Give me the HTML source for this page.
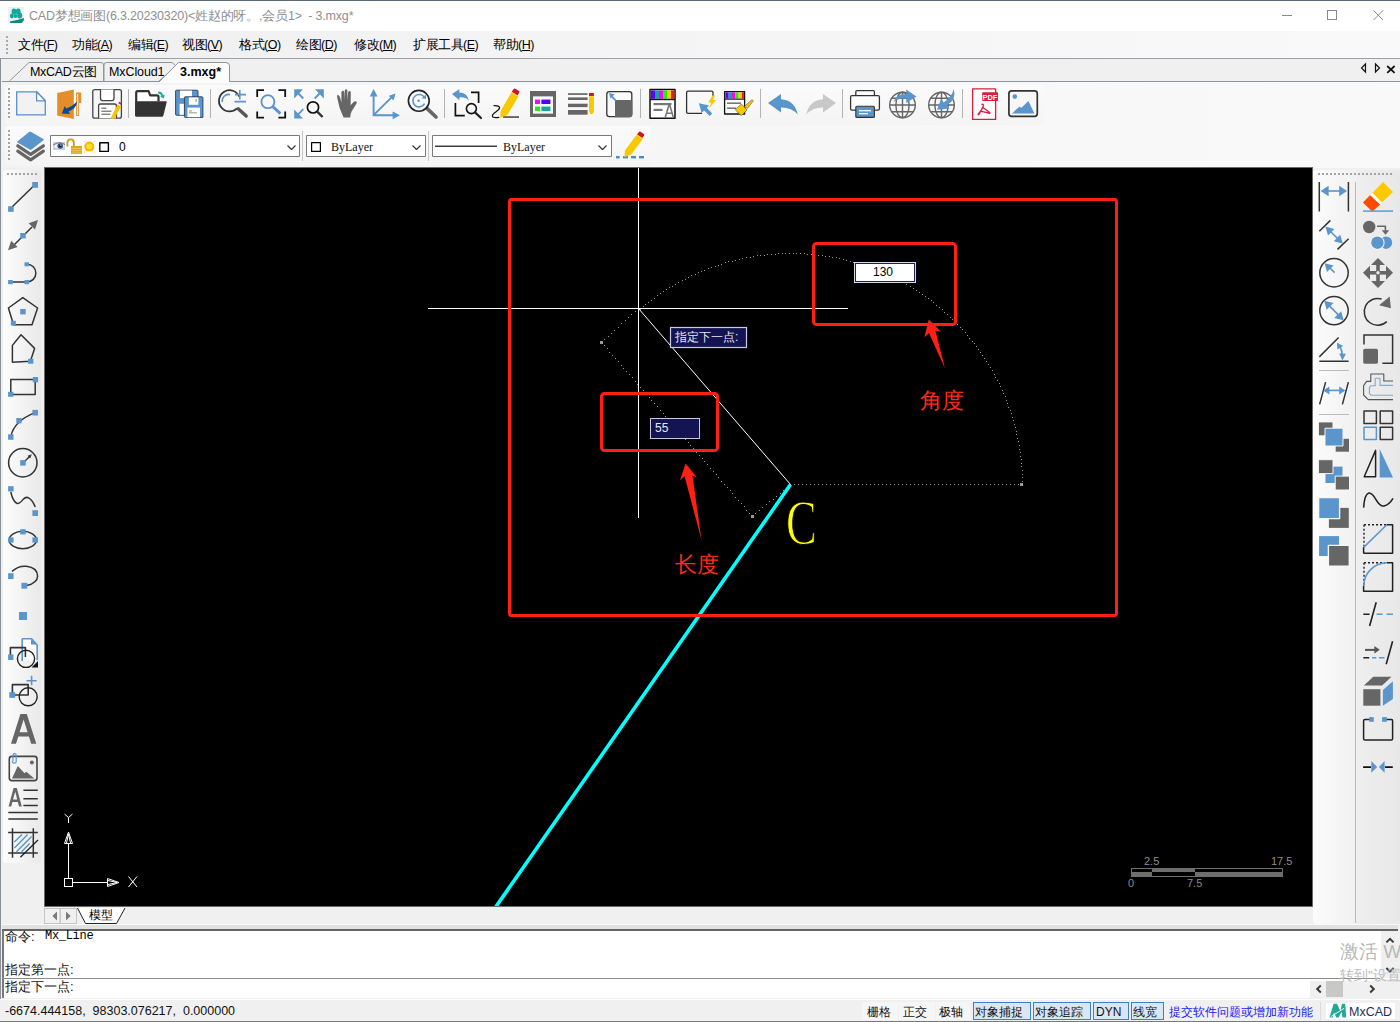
<!DOCTYPE html>
<html><head><meta charset="utf-8"><style>
*{margin:0;padding:0;box-sizing:border-box}
html,body{width:1400px;height:1022px;overflow:hidden;background:#f0f0f0;font-family:"Liberation Sans",sans-serif;font-size:12px;color:#000}
.a{position:absolute}
.t{position:absolute;white-space:nowrap}
svg{position:absolute;overflow:visible}
#title{left:0;top:0;width:1400px;height:31px;background:#fff;border-top:1px solid #5a6a7a}
#menu{left:0;top:31px;width:1400px;height:27px;background:linear-gradient(90deg,#efefef,#f4f4f4 40%,#f9f9f9)}
.mi{position:absolute;top:37.5px;font-size:12.5px;line-height:15px;color:#000;letter-spacing:-0.5px;white-space:nowrap}
#mdi{left:0;top:58px;width:1400px;height:964px;border-left:1px solid #8a9098;border-top:1px solid #9aa0a6}
#dock{left:2px;top:82px;width:1398px;height:86px;background:linear-gradient(90deg,#f2f2f2,#f6f6f6 40%,#f9f9f9)}
#tabs{left:2px;top:59px;width:1398px;height:23px;background:#f0f0f0}
#tb1{left:5px;top:85px;width:1039px;height:40px;background:linear-gradient(#fbfbfb,#f4f4f4);border-radius:4px}
#tb2{left:5px;top:126px;width:646px;height:40px;background:linear-gradient(#fbfbfb,#f4f4f4);border-radius:4px}
#canvas{left:44px;top:167px;width:1269px;height:740px;background:#000;border:1px solid #6a6a6a}
#ltb{left:3px;top:170px;width:38px;height:693px;background:linear-gradient(90deg,#fdfdfd,#e9e9e9);border-radius:3px}
#rtb{left:1313px;top:170px;width:87px;height:754px;background:linear-gradient(90deg,#fcfcfc 0,#f1f1f1 48%,#eeeeee 52%,#e8e8e8 100%);border-radius:3px}
#modelbar{left:44px;top:907px;width:1269px;height:17px;background:#f0f0f0}
#cmdstrip{left:2px;top:924px;width:1396px;height:7px;background:#e1e1e1;border-top:1px solid #fafafa;border-bottom:2px solid #646464}
#cmd{left:2px;top:931px;width:1396px;height:67px;background:#fff;border-left:2px solid #7a7a7a}
#status{left:0;top:999px;width:1400px;height:23px;background:#f0f0f0;border-top:1px solid #fff;border-bottom:1px solid #7a7a7a}
</style></head><body>
<div id="title" class="a"></div>
<svg style="left:0;top:0" width="30" height="30">
<rect x="8" y="7" width="16" height="16" rx="1" fill="#f0f0f0"/>
<g fill="#12a898"><ellipse cx="14" cy="11.6" rx="2.4" ry="3"/><ellipse cx="18.2" cy="11.4" rx="2.4" ry="3"/><ellipse cx="11.8" cy="16" rx="1.9" ry="2.4"/><ellipse cx="15.6" cy="16" rx="2.2" ry="2"/><ellipse cx="19.8" cy="15.6" rx="2.4" ry="3"/></g>
<path d="M9.6 21.4 Q17 20.4 24 18 L23.8 20.6 L21.6 23 H10.4Z" fill="#0e8a7c"/>
</svg>
<div class="t" style="left:29px;top:8px;font-size:12.5px;line-height:17px;color:#8f8f8f;letter-spacing:-0.2px">CAD梦想画图(6.3.20230320)&lt;姓赵的呀。,会员1&gt; &nbsp;- 3.mxg*</div>
<svg style="left:1282px;top:15px" width="12" height="2"><rect x="0" y="0" width="10" height="1" fill="#8a8a8a"/></svg>
<svg style="left:1327px;top:10px" width="12" height="12"><rect x="0.5" y="0.5" width="9" height="9" fill="none" stroke="#8a8a8a" stroke-width="1"/></svg>
<svg style="left:1373px;top:10px" width="12" height="12"><path d="M0.5 0.5 L10 10 M10 0.5 L0.5 10" stroke="#8a8a8a" stroke-width="1"/></svg>
<div id="menu" class="a"></div>
<svg style="left:6px;top:36px" width="3" height="20"><g fill="#a8a8a8"><rect x="0" y="0" width="2" height="2"/><rect x="0" y="4" width="2" height="2"/><rect x="0" y="8" width="2" height="2"/><rect x="0" y="12" width="2" height="2"/><rect x="0" y="16" width="2" height="2"/></g></svg>
<div class="mi" style="left:18px">文件(<u>F</u>)</div>
<div class="mi" style="left:72px">功能(<u>A</u>)</div>
<div class="mi" style="left:128px">编辑(<u>E</u>)</div>
<div class="mi" style="left:182px">视图(<u>V</u>)</div>
<div class="mi" style="left:239px">格式(<u>O</u>)</div>
<div class="mi" style="left:296px">绘图(<u>D</u>)</div>
<div class="mi" style="left:354px">修改(<u>M</u>)</div>
<div class="mi" style="left:413px">扩展工具(<u>E</u>)</div>
<div class="mi" style="left:493px">帮助(<u>H</u>)</div>
<div id="mdi" class="a"></div>
<div id="dock" class="a"></div>
<div id="tabs" class="a"></div>
<svg style="left:0;top:58px" width="1400" height="25">
<path d="M9.5 23 L29 4.5 L101 4.5 Q103.5 4.5 103.5 7 L103.5 23" fill="#f0f0f0" stroke="#8f959c" stroke-width="1"/>
<path d="M104 23 L104 7 Q104 4.5 106.5 4.5 L172 4.5 L176 8 L159 23" fill="#f0f0f0" stroke="#8f959c" stroke-width="1"/>
<path d="M2 23.5 L1400 23.5" stroke="#8f959c" stroke-width="1"/>
<path d="M159.5 23.5 L178.5 4.5 L226 4.5 Q229.5 4.5 229.5 8 L229.5 23.5" fill="#fcfcfc" stroke="#8f959c" stroke-width="1"/>
<rect x="160" y="23" width="69" height="2" fill="#fcfcfc"/>
</svg>
<div class="t" style="left:30px;top:64px;font-size:12.5px;line-height:16px;letter-spacing:-0.3px">MxCAD云图</div>
<div class="t" style="left:109px;top:64px;font-size:12.5px;line-height:16px;letter-spacing:-0.1px">MxCloud1</div>
<div class="t" style="left:180px;top:64px;font-size:12.5px;line-height:16px;font-weight:bold">3.mxg*</div>
<svg style="left:1358px;top:62px" width="42" height="14">
<path d="M7.5 2 L3.5 6 L7.5 10 Z" fill="none" stroke="#111" stroke-width="1.2"/>
<path d="M17.5 2 L21.5 6 L17.5 10 Z" fill="none" stroke="#111" stroke-width="1.2"/>
<path d="M29.2 4 L36.6 10.8 M36.6 4 L29.2 10.8" stroke="#111" stroke-width="1.7"/>
</svg>
<div id="tb1" class="a"></div>
<div id="tb2" class="a"></div>
<div id="canvas" class="a"></div>
<svg style="left:0;top:0" width="1400" height="1022">
<defs><clipPath id="cc"><rect x="45" y="168" width="1267" height="738"/></clipPath></defs>
<g clip-path="url(#cc)">
<g fill="#9a9a9a"><rect x="1022" y="484" width="1" height="1"/><rect x="1022" y="481" width="1" height="1"/><rect x="1022" y="477" width="1" height="1"/><rect x="1022" y="474" width="1" height="1"/><rect x="1022" y="470" width="1" height="1"/><rect x="1021" y="466" width="1" height="1"/><rect x="1021" y="463" width="1" height="1"/><rect x="1021" y="459" width="1" height="1"/><rect x="1020" y="456" width="1" height="1"/><rect x="1020" y="452" width="1" height="1"/><rect x="1019" y="449" width="1" height="1"/><rect x="1019" y="445" width="1" height="1"/><rect x="1018" y="441" width="1" height="1"/><rect x="1017" y="438" width="1" height="1"/><rect x="1016" y="434" width="1" height="1"/><rect x="1016" y="431" width="1" height="1"/><rect x="1015" y="427" width="1" height="1"/><rect x="1014" y="424" width="1" height="1"/><rect x="1013" y="420" width="1" height="1"/><rect x="1012" y="417" width="1" height="1"/><rect x="1011" y="413" width="1" height="1"/><rect x="1010" y="410" width="1" height="1"/><rect x="1008" y="407" width="1" height="1"/><rect x="1007" y="403" width="1" height="1"/><rect x="1006" y="400" width="1" height="1"/><rect x="1005" y="396" width="1" height="1"/><rect x="1003" y="393" width="1" height="1"/><rect x="1002" y="390" width="1" height="1"/><rect x="1000" y="386" width="1" height="1"/><rect x="999" y="383" width="1" height="1"/><rect x="997" y="380" width="1" height="1"/><rect x="995" y="377" width="1" height="1"/><rect x="994" y="374" width="1" height="1"/><rect x="992" y="370" width="1" height="1"/><rect x="990" y="367" width="1" height="1"/><rect x="988" y="364" width="1" height="1"/><rect x="986" y="361" width="1" height="1"/><rect x="984" y="358" width="1" height="1"/><rect x="982" y="355" width="1" height="1"/><rect x="980" y="352" width="1" height="1"/><rect x="978" y="349" width="1" height="1"/><rect x="976" y="346" width="1" height="1"/><rect x="974" y="343" width="1" height="1"/><rect x="972" y="341" width="1" height="1"/><rect x="969" y="338" width="1" height="1"/><rect x="967" y="335" width="1" height="1"/><rect x="965" y="332" width="1" height="1"/><rect x="962" y="329" width="1" height="1"/><rect x="960" y="327" width="1" height="1"/><rect x="957" y="324" width="1" height="1"/><rect x="955" y="322" width="1" height="1"/><rect x="952" y="319" width="1" height="1"/><rect x="950" y="317" width="1" height="1"/><rect x="947" y="314" width="1" height="1"/><rect x="944" y="312" width="1" height="1"/><rect x="942" y="309" width="1" height="1"/><rect x="939" y="307" width="1" height="1"/><rect x="936" y="305" width="1" height="1"/><rect x="933" y="302" width="1" height="1"/><rect x="931" y="300" width="1" height="1"/><rect x="928" y="298" width="1" height="1"/><rect x="925" y="296" width="1" height="1"/><rect x="922" y="294" width="1" height="1"/><rect x="919" y="292" width="1" height="1"/><rect x="916" y="290" width="1" height="1"/><rect x="913" y="288" width="1" height="1"/><rect x="910" y="286" width="1" height="1"/><rect x="906" y="284" width="1" height="1"/><rect x="903" y="282" width="1" height="1"/><rect x="900" y="281" width="1" height="1"/><rect x="897" y="279" width="1" height="1"/><rect x="894" y="277" width="1" height="1"/><rect x="891" y="276" width="1" height="1"/><rect x="887" y="274" width="1" height="1"/><rect x="884" y="273" width="1" height="1"/><rect x="881" y="271" width="1" height="1"/><rect x="877" y="270" width="1" height="1"/><rect x="874" y="269" width="1" height="1"/><rect x="871" y="267" width="1" height="1"/><rect x="867" y="266" width="1" height="1"/><rect x="864" y="265" width="1" height="1"/><rect x="860" y="264" width="1" height="1"/><rect x="857" y="263" width="1" height="1"/><rect x="853" y="262" width="1" height="1"/><rect x="850" y="261" width="1" height="1"/><rect x="846" y="260" width="1" height="1"/><rect x="843" y="259" width="1" height="1"/><rect x="839" y="258" width="1" height="1"/><rect x="836" y="257" width="1" height="1"/><rect x="832" y="257" width="1" height="1"/><rect x="829" y="256" width="1" height="1"/><rect x="825" y="256" width="1" height="1"/><rect x="822" y="255" width="1" height="1"/><rect x="818" y="255" width="1" height="1"/><rect x="814" y="254" width="1" height="1"/><rect x="811" y="254" width="1" height="1"/><rect x="807" y="254" width="1" height="1"/><rect x="804" y="253" width="1" height="1"/><rect x="800" y="253" width="1" height="1"/><rect x="796" y="253" width="1" height="1"/><rect x="793" y="253" width="1" height="1"/><rect x="789" y="253" width="1" height="1"/><rect x="785" y="253" width="1" height="1"/><rect x="782" y="253" width="1" height="1"/><rect x="778" y="253" width="1" height="1"/><rect x="775" y="254" width="1" height="1"/><rect x="771" y="254" width="1" height="1"/><rect x="767" y="254" width="1" height="1"/><rect x="764" y="255" width="1" height="1"/><rect x="760" y="255" width="1" height="1"/><rect x="757" y="255" width="1" height="1"/><rect x="753" y="256" width="1" height="1"/><rect x="750" y="257" width="1" height="1"/><rect x="746" y="257" width="1" height="1"/><rect x="742" y="258" width="1" height="1"/><rect x="739" y="259" width="1" height="1"/><rect x="735" y="260" width="1" height="1"/><rect x="732" y="261" width="1" height="1"/><rect x="728" y="261" width="1" height="1"/><rect x="725" y="262" width="1" height="1"/><rect x="721" y="264" width="1" height="1"/><rect x="718" y="265" width="1" height="1"/><rect x="715" y="266" width="1" height="1"/><rect x="711" y="267" width="1" height="1"/><rect x="708" y="268" width="1" height="1"/><rect x="704" y="270" width="1" height="1"/><rect x="701" y="271" width="1" height="1"/><rect x="698" y="272" width="1" height="1"/><rect x="695" y="274" width="1" height="1"/><rect x="691" y="275" width="1" height="1"/><rect x="688" y="277" width="1" height="1"/><rect x="685" y="279" width="1" height="1"/><rect x="682" y="280" width="1" height="1"/><rect x="678" y="282" width="1" height="1"/><rect x="675" y="284" width="1" height="1"/><rect x="672" y="286" width="1" height="1"/><rect x="669" y="287" width="1" height="1"/><rect x="666" y="289" width="1" height="1"/><rect x="663" y="291" width="1" height="1"/><rect x="660" y="293" width="1" height="1"/><rect x="657" y="295" width="1" height="1"/><rect x="654" y="298" width="1" height="1"/><rect x="651" y="300" width="1" height="1"/><rect x="648" y="302" width="1" height="1"/><rect x="645" y="304" width="1" height="1"/><rect x="643" y="306" width="1" height="1"/><rect x="640" y="309" width="1" height="1"/><rect x="794" y="484" width="1" height="1"/><rect x="798" y="484" width="1" height="1"/><rect x="802" y="484" width="1" height="1"/><rect x="806" y="484" width="1" height="1"/><rect x="810" y="484" width="1" height="1"/><rect x="814" y="484" width="1" height="1"/><rect x="818" y="484" width="1" height="1"/><rect x="822" y="484" width="1" height="1"/><rect x="826" y="484" width="1" height="1"/><rect x="830" y="484" width="1" height="1"/><rect x="834" y="484" width="1" height="1"/><rect x="838" y="484" width="1" height="1"/><rect x="842" y="484" width="1" height="1"/><rect x="846" y="484" width="1" height="1"/><rect x="850" y="484" width="1" height="1"/><rect x="854" y="484" width="1" height="1"/><rect x="858" y="484" width="1" height="1"/><rect x="862" y="484" width="1" height="1"/><rect x="866" y="484" width="1" height="1"/><rect x="870" y="484" width="1" height="1"/><rect x="874" y="484" width="1" height="1"/><rect x="878" y="484" width="1" height="1"/><rect x="882" y="484" width="1" height="1"/><rect x="886" y="484" width="1" height="1"/><rect x="890" y="484" width="1" height="1"/><rect x="894" y="484" width="1" height="1"/><rect x="898" y="484" width="1" height="1"/><rect x="902" y="484" width="1" height="1"/><rect x="906" y="484" width="1" height="1"/><rect x="910" y="484" width="1" height="1"/><rect x="914" y="484" width="1" height="1"/><rect x="918" y="484" width="1" height="1"/><rect x="922" y="484" width="1" height="1"/><rect x="926" y="484" width="1" height="1"/><rect x="930" y="484" width="1" height="1"/><rect x="934" y="484" width="1" height="1"/><rect x="938" y="484" width="1" height="1"/><rect x="942" y="484" width="1" height="1"/><rect x="946" y="484" width="1" height="1"/><rect x="950" y="484" width="1" height="1"/><rect x="954" y="484" width="1" height="1"/><rect x="958" y="484" width="1" height="1"/><rect x="962" y="484" width="1" height="1"/><rect x="966" y="484" width="1" height="1"/><rect x="970" y="484" width="1" height="1"/><rect x="974" y="484" width="1" height="1"/><rect x="978" y="484" width="1" height="1"/><rect x="982" y="484" width="1" height="1"/><rect x="986" y="484" width="1" height="1"/><rect x="990" y="484" width="1" height="1"/><rect x="994" y="484" width="1" height="1"/><rect x="998" y="484" width="1" height="1"/><rect x="1002" y="484" width="1" height="1"/><rect x="1006" y="484" width="1" height="1"/><rect x="1010" y="484" width="1" height="1"/><rect x="1014" y="484" width="1" height="1"/><rect x="1018" y="484" width="1" height="1"/><rect x="635" y="311" width="1" height="1"/><rect x="631" y="314" width="1" height="1"/><rect x="628" y="317" width="1" height="1"/><rect x="625" y="320" width="1" height="1"/><rect x="621" y="323" width="1" height="1"/><rect x="618" y="327" width="1" height="1"/><rect x="614" y="330" width="1" height="1"/><rect x="611" y="333" width="1" height="1"/><rect x="608" y="336" width="1" height="1"/><rect x="604" y="339" width="1" height="1"/><rect x="601" y="342" width="1" height="1"/><rect x="604" y="345" width="1" height="1"/><rect x="607" y="348" width="1" height="1"/><rect x="609" y="352" width="1" height="1"/><rect x="612" y="355" width="1" height="1"/><rect x="615" y="358" width="1" height="1"/><rect x="618" y="361" width="1" height="1"/><rect x="621" y="365" width="1" height="1"/><rect x="623" y="368" width="1" height="1"/><rect x="626" y="371" width="1" height="1"/><rect x="629" y="374" width="1" height="1"/><rect x="632" y="377" width="1" height="1"/><rect x="635" y="381" width="1" height="1"/><rect x="637" y="384" width="1" height="1"/><rect x="640" y="387" width="1" height="1"/><rect x="643" y="390" width="1" height="1"/><rect x="646" y="394" width="1" height="1"/><rect x="649" y="397" width="1" height="1"/><rect x="651" y="400" width="1" height="1"/><rect x="654" y="403" width="1" height="1"/><rect x="657" y="406" width="1" height="1"/><rect x="660" y="410" width="1" height="1"/><rect x="663" y="413" width="1" height="1"/><rect x="665" y="416" width="1" height="1"/><rect x="668" y="419" width="1" height="1"/><rect x="671" y="423" width="1" height="1"/><rect x="674" y="426" width="1" height="1"/><rect x="676" y="429" width="1" height="1"/><rect x="679" y="432" width="1" height="1"/><rect x="682" y="435" width="1" height="1"/><rect x="685" y="439" width="1" height="1"/><rect x="688" y="442" width="1" height="1"/><rect x="690" y="445" width="1" height="1"/><rect x="693" y="448" width="1" height="1"/><rect x="696" y="452" width="1" height="1"/><rect x="699" y="455" width="1" height="1"/><rect x="702" y="458" width="1" height="1"/><rect x="704" y="461" width="1" height="1"/><rect x="707" y="464" width="1" height="1"/><rect x="710" y="468" width="1" height="1"/><rect x="713" y="471" width="1" height="1"/><rect x="716" y="474" width="1" height="1"/><rect x="718" y="477" width="1" height="1"/><rect x="721" y="481" width="1" height="1"/><rect x="724" y="484" width="1" height="1"/><rect x="727" y="487" width="1" height="1"/><rect x="730" y="490" width="1" height="1"/><rect x="732" y="493" width="1" height="1"/><rect x="735" y="497" width="1" height="1"/><rect x="738" y="500" width="1" height="1"/><rect x="741" y="503" width="1" height="1"/><rect x="744" y="506" width="1" height="1"/><rect x="746" y="510" width="1" height="1"/><rect x="749" y="513" width="1" height="1"/><rect x="752" y="516" width="1" height="1"/><rect x="755" y="513" width="1" height="1"/><rect x="759" y="510" width="1" height="1"/><rect x="762" y="507" width="1" height="1"/><rect x="766" y="504" width="1" height="1"/><rect x="769" y="501" width="1" height="1"/><rect x="773" y="499" width="1" height="1"/><rect x="776" y="496" width="1" height="1"/><rect x="780" y="493" width="1" height="1"/><rect x="783" y="490" width="1" height="1"/><rect x="787" y="487" width="1" height="1"/><rect x="790" y="484" width="1" height="1"/></g>
<rect x="600" y="341" width="3" height="3" fill="#9a9a9a"/>
<rect x="751" y="515" width="3" height="3" fill="#9a9a9a"/>
<rect x="1020" y="483" width="3" height="3" fill="#9a9a9a"/>
<path d="M428 308.5 H848 M638.5 168 V518" stroke="#fff" stroke-width="1"/>
<path d="M638.5 308.5 L790.5 484.5" stroke="#fff" stroke-width="1"/>
<path d="M790.5 484.5 L495 908" stroke="#00ffff" stroke-width="3.6"/>
<rect x="509.5" y="199.5" width="607" height="416" rx="2" fill="none" stroke="#ff2015" stroke-width="3"/>
<rect x="813.5" y="243.5" width="142" height="81" rx="3" fill="none" stroke="#ff2015" stroke-width="3"/>
<rect x="601.5" y="393.5" width="116" height="57" rx="3" fill="none" stroke="#ff2015" stroke-width="3"/>
<path d="M685.5 463.5 L697 477.5 L692.5 475.5 L701.5 540 L684.5 476 L680 480.5 Z" fill="#ff2015"/>
<path d="M928.8 319.5 L940.8 331.5 L935.5 331 L945 368.5 L929 333 L924.3 337.5 Z" fill="#ff2015"/>
<rect x="854.5" y="262.5" width="61" height="20" fill="#fff" stroke="#d8d8e8" stroke-width="1"/>
<rect x="855.5" y="263.5" width="59" height="18" fill="#fff" stroke="#1a1a6a" stroke-width="1"/>
<rect x="650.5" y="418.5" width="49" height="20" fill="#141452" stroke="#c8c8e0" stroke-width="1"/>
<rect x="670.5" y="327.5" width="76" height="20" fill="#141452" stroke="#c8c8e8" stroke-width="1.2"/>
<g stroke="#fff" stroke-width="1" fill="none">
<rect x="64.5" y="878.5" width="8" height="8"/>
<path d="M68.5 878 V843.5 M72.5 882.5 H107.5"/>
<path d="M64.5 843.5 H72.5 L68.5 832 Z M66.5 843 L68.5 834 L70.5 843"/>
<path d="M107.5 878.5 V886.5 L119 882.5 Z M108 880.5 L117 882.5 L108 884.5"/>
<path d="M64.5 814 L68.5 817.5 L72.5 814 M68.5 817.5 V823"/>
<path d="M128.5 876.5 L137 887 M137 876.5 L128.5 887"/>
</g>
<g fill="none" stroke="#6e6e6e" stroke-width="1">
<rect x="1131.5" y="868.5" width="151" height="8"/>
</g>
<g fill="#6e6e6e">
<rect x="1152" y="868" width="43" height="4"/>
<rect x="1131" y="872" width="21" height="5"/>
<rect x="1195" y="872" width="88" height="5"/>
</g>
</g>
</svg>
<div class="t" style="left:675px;top:330px;font-size:12px;line-height:15px;color:#e8e8f0">指定下一点:</div>
<div class="t" style="left:655px;top:421px;font-size:12px;line-height:15px;color:#e8e8f8">55</div>
<div class="t" style="left:873px;top:265px;font-size:12px;line-height:15px;color:#000">130</div>
<div class="t" style="left:920px;top:388px;font-size:22px;line-height:26px;color:#ff2a1a;font-weight:300">角度</div>
<div class="t" style="left:675px;top:552px;font-size:22px;line-height:26px;color:#ff2a1a;font-weight:300">长度</div>
<div class="t" style="left:786px;top:491px;font-size:64px;line-height:64px;color:#ffff00;font-family:'Liberation Serif',serif;transform:scaleX(0.72);-webkit-text-stroke:0.9px #000;transform-origin:0 0">C</div>
<div class="t" style="left:1144px;top:855px;font-size:11px;line-height:12px;color:#8c8c8c">2.5</div>
<div class="t" style="left:1271px;top:855px;font-size:11px;line-height:12px;color:#8c8c8c">17.5</div>
<div class="t" style="left:1128px;top:877px;font-size:11px;line-height:12px;color:#8c8c8c">0</div>
<div class="t" style="left:1187px;top:877px;font-size:11px;line-height:12px;color:#8c8c8c">7.5</div>
<svg style="left:0;top:0" width="1050" height="128" stroke-linejoin="round">
<g fill="#a4a4a4"><rect x="8" y="88" width="2" height="2"/><rect x="8" y="92" width="2" height="2"/><rect x="8" y="96" width="2" height="2"/><rect x="8" y="100" width="2" height="2"/><rect x="8" y="104" width="2" height="2"/><rect x="8" y="108" width="2" height="2"/><rect x="8" y="112" width="2" height="2"/><rect x="8" y="116" width="2" height="2"/></g>
<g fill="#b4b4b4"><rect x="128" y="89" width="1" height="29"/><rect x="210" y="89" width="1" height="29"/><rect x="444" y="89" width="1" height="29"/><rect x="640" y="89" width="1" height="29"/><rect x="760" y="89" width="1" height="29"/><rect x="842" y="89" width="1" height="29"/><rect x="962" y="89" width="1" height="29"/></g>
<!-- 1 new -->
<path d="M16.7 91.8 H36.6 L45.3 100.8 V114.9 H16.7 Z" fill="#f2f2f2" stroke="#5a8fc8" stroke-width="1.3"/>
<path d="M36.6 91.8 V100.8 H45.3 Z" fill="#fff" stroke="#5a8fc8" stroke-width="1.3"/>
<!-- 2 open orange -->
<path d="M57.2 93 L73.9 89.4 V119 L57.2 115.5 Z" fill="#e38e2a"/>
<rect x="73.9" y="92" width="2.2" height="25" fill="#fff"/>
<path d="M76.1 92.6 H81.2 V103 H79 V116 H76.1 Z" fill="#e38e2a"/>
<rect x="77" y="94" width="1.2" height="21" fill="#fde8c8"/>
<path d="M77.2 101.5 Q76.5 108.5 68.5 111.5 L70 114 L61.8 113.5 L64.8 106 L66.2 108.6 Q73 106 77.2 101.5Z" fill="#0d4a94"/>
<!-- 3 save pencil -->
<rect x="92.8" y="89.6" width="28.6" height="28.6" rx="2" fill="#f7f7f7" stroke="#444" stroke-width="1.3"/>
<path d="M100.5 89.6 V98.5 Q100.5 100.6 102.5 100.6 H112 Q114 100.6 114 98.5 V89.6" fill="#fff" stroke="#444" stroke-width="1.3"/>
<path d="M98.6 118.2 V106 Q98.6 104 100.6 104 H114.5 Q116.4 104 116.4 106 V118.2" fill="#fff" stroke="#444" stroke-width="1.3"/>
<g fill="#777"><rect x="101.4" y="107.6" width="5" height="1.3"/><rect x="101.4" y="110.6" width="10" height="1.3"/><rect x="101.4" y="113.6" width="9" height="1.3"/></g>
<path d="M110.5 118.5 L117.6 104.5 L121.2 106.4 L114.2 119 Z" fill="#f5c400"/>
<path d="M118.2 103.2 L119.2 101.7 L121.9 103.2 L121 104.8 Z" fill="#d02020"/>
<!-- 4 open folder dark -->
<path d="M136.2 116 V92.8 Q136.2 91.2 137.8 91.2 H148.6 L150.2 95.4 H157 Q158.5 95.4 158.5 97 V101.5" fill="#fff" stroke="#333" stroke-width="2.2"/>
<path d="M138.4 101.2 H165.8 Q167 101.2 166.6 102.6 L163.4 115.4 Q163 116.8 161.6 116.8 H136.4 Q135.2 116.8 135.2 115.4 V102.6 Q135.5 101.2 138.4 101.2Z" fill="#333"/>
<path d="M158.2 91.4 Q162.4 91.6 163.2 95.2 L164.8 94.6 L163.8 98.6 L160 96.6 L161.5 96 Q160.8 93.6 158.2 93.4Z" fill="#20a89a"/>
<!-- 5 save as floppies -->
<path d="M175.6 91 Q175.6 90.2 176.4 90.2 H197 Q198 90.2 198 91.2 V115.2 H176.4 Q175.6 115.2 175.6 114.4Z" fill="#5b95cf" stroke="#2a3a4a" stroke-width="0.9"/>
<rect x="180" y="90.6" width="12" height="7.5" fill="#fff"/>
<rect x="179.6" y="103.8" width="4.8" height="11" fill="#fff"/>
<path d="M184.4 97.6 Q184.4 96.8 185.2 96.8 H202 Q202.9 96.8 202.9 97.8 V117.4 H185.2 Q184.4 117.4 184.4 116.6Z" fill="#5b95cf" stroke="#2a3a4a" stroke-width="0.9"/>
<rect x="188.8" y="97.4" width="9.6" height="7.4" fill="#fff"/>
<rect x="195.6" y="99" width="1" height="3" fill="#888"/>
<rect x="187.4" y="107.6" width="12.6" height="9.6" fill="#fff"/>
<g fill="#888"><rect x="189" y="110.5" width="3" height="0.9"/><rect x="189" y="112.4" width="8" height="0.9"/></g>
<!-- 6 zoom +- -->
<path d="M239.3 96.6 A10.6 10.6 0 1 0 237 108.4" fill="none" stroke="#333" stroke-width="1.8"/>
<path d="M222.3 102 A6.4 6.4 0 0 1 230 94.6" fill="none" stroke="#5a95cc" stroke-width="1.6"/>
<path d="M239.8 90 V99.6 M235 94.6 H246 M234.5 101.6 H246" stroke="#5a95cc" stroke-width="1.6"/>
<path d="M238.2 108.8 L246.2 116" stroke="#555" stroke-width="3.4" stroke-linecap="round"/>
<!-- 7 zoom window -->
<path d="M257.2 97 V90.2 H264 M278.4 90.2 H285.2 V97 M257.2 111.4 V117.6 H264 M278.4 117.6 H285.2 V111.4" fill="none" stroke="#111" stroke-width="1.8" stroke-linejoin="miter"/>
<circle cx="267.9" cy="101.7" r="6.5" fill="none" stroke="#5a95cc" stroke-width="1.8"/>
<path d="M272.8 106.6 L280.4 113.6" stroke="#5a95cc" stroke-width="2.8"/>
<!-- 8 zoom extents -->
<g fill="#5a95cc"><path d="M294.2 89.3 H303 L294.2 98.4Z"/><path d="M323.8 89.3 H315 L323.8 98.4Z"/><path d="M294.2 118.4 H303 L294.2 109.4Z"/></g>
<path d="M297 92 L303.3 98.5 M321 92 L314.7 98.5 M297 115.6 L303.3 109.2" stroke="#5a95cc" stroke-width="1.8"/>
<circle cx="313" cy="107.4" r="5.6" fill="none" stroke="#111" stroke-width="1.7"/>
<path d="M317.2 111.6 L322.6 117" stroke="#333" stroke-width="2.4"/>
<!-- 9 hand -->
<path d="M343.6 117.6 L339.8 108.6 Q338.4 103 337.2 97.4 Q336.4 94.8 338.2 95 Q339.6 95.4 340.4 98.4 L341.4 102.4 L341.4 92.4 Q341.6 90.6 343 90.8 Q344.2 91 344.2 92.6 V100.6 L344.8 90.2 Q345.2 89 346.4 89.2 Q347.6 89.6 347.4 91 V100.6 L348.2 92 Q348.6 90.8 349.8 91 Q350.8 91.4 350.8 92.6 L350.6 105.2 L353.2 102.4 Q355.4 100.4 356.6 102 L356.8 103 L351.6 111.4 Q350.4 113.4 350.2 117.6Z" fill="#666"/>
<!-- 10 axes -->
<path d="M373.6 95.5 V115.2 H393.5 M373.6 115.2 L393 95.8" fill="none" stroke="#5a95cc" stroke-width="1.9" stroke-linejoin="miter"/>
<g fill="#5a95cc"><path d="M373.6 89 L377.6 96.6 H369.8Z"/><path d="M400 115.2 L392.6 111.4 V119.2Z"/><path d="M395.6 93.6 L393.4 100.5 L388.8 95.8Z"/></g>
<!-- 11 zoom realtime -->
<path d="M436 117 L427.2 108.6" stroke="#666" stroke-width="3.6" stroke-linecap="round"/>
<circle cx="418.8" cy="100.8" r="10.4" fill="none" stroke="#222" stroke-width="1.6"/>
<path d="M424.5 97.6 A6.2 6.2 0 1 0 424.6 103.6" fill="none" stroke="#5a95cc" stroke-width="1.6"/>
<path d="M425.8 94.4 L426.2 98.8 L421.6 98.4Z" fill="#5a95cc"/>
<circle cx="418.6" cy="100.8" r="1.2" fill="#5a95cc"/>
<!-- 12 zoom prev -->
<path d="M452 94 L459.2 89.2 L459.4 92.4 Q467 92.6 469 100.4 Q465.4 97 459.4 97.4 L459.4 100.2Z" fill="#5a95cc"/>
<path d="M471 92.4 H478.6 V103 M455.4 103 V115.6 H464.8" fill="none" stroke="#111" stroke-width="1.7" stroke-linejoin="miter"/>
<circle cx="471.4" cy="108.6" r="5" fill="none" stroke="#111" stroke-width="1.6"/>
<path d="M475 112.4 L481 118" stroke="#222" stroke-width="2.2" stroke-linecap="round"/>
<!-- 13 pencil squiggle -->
<path d="M494 105.6 Q499.6 105.4 499.6 107.8 Q499.4 109.4 496 111.8 Q492 114.4 492.4 116.4 Q493 118.2 498.8 117.4" fill="none" stroke="#111" stroke-width="1.3" stroke-linecap="round"/>
<rect x="503" y="116.2" width="16" height="1.7" fill="#555"/>
<path d="M500.2 117.8 L500.6 111 L511.6 92.2 L518.4 96.4 L507.4 115Z" fill="#f8c800"/>
<path d="M511.8 91.8 L513.6 89 Q514.4 88.2 515.4 88.8 L519 91 Q519.8 91.6 519.2 92.6 L517.6 95.4Z" fill="#d01818"/>
<!-- 14 layer table -->
<rect x="530" y="91" width="26" height="26" fill="#666"/>
<rect x="533" y="96.4" width="20" height="17.2" fill="#fff"/>
<rect x="534" y="97.6" width="18" height="15" fill="#f4f4f4"/>
<rect x="535" y="99.6" width="5" height="4.4" fill="#ff00ff"/>
<rect x="541.4" y="99.6" width="9" height="4.4" fill="#5000ff"/>
<rect x="535" y="106.6" width="5" height="4.4" fill="#22ee10"/>
<rect x="541.4" y="106.6" width="9" height="4.4" fill="#10a89a"/>
<!-- 15 lines pencil -->
<g fill="#666"><rect x="568" y="93.2" width="19.6" height="1.7"/><rect x="568" y="97.4" width="19.6" height="2.6"/><rect x="568" y="103.7" width="19.6" height="3.4"/><rect x="568" y="110" width="19.6" height="4.7"/></g>
<rect x="589" y="93" width="4.9" height="3" fill="#d01818"/>
<path d="M589 96.2 H593.9 V112 Q591.5 116.6 589 112Z" fill="#f8c800"/>
<!-- 16 square arrow -->
<rect x="606.8" y="91.6" width="25" height="25" rx="2.6" fill="#fafafa" stroke="#333" stroke-width="1.3"/>
<path d="M615 100 H629.6 Q632.2 100 632.2 102.6 V114.4 Q632.2 117.2 629.6 117.2 H615Z" fill="#666"/>
<path d="M616 100.8 L611 95.6" stroke="#5a95cc" stroke-width="1.8"/>
<path d="M609 93 L614.6 94.2 L610.4 98.4Z" fill="#5a95cc"/>
<!-- 17 text style -->
<rect x="650" y="89.6" width="25" height="28.6" fill="#fff" stroke="#111" stroke-width="1.5"/>
<g><rect x="651" y="90.4" width="4" height="8.4" fill="#5a00ff"/><rect x="655" y="90.4" width="4" height="8.4" fill="#10a89a"/><rect x="659" y="90.4" width="4" height="8.4" fill="#ff00ff"/><rect x="663" y="90.4" width="4" height="8.4" fill="#22ee10"/><rect x="667" y="90.4" width="4" height="8.4" fill="#ffc800"/><rect x="671" y="90.4" width="3.5" height="8.4" fill="#d82020"/></g>
<rect x="650" y="98.8" width="25" height="1.4" fill="#111"/>
<rect x="653.5" y="103" width="18" height="2.2" fill="#777"/>
<rect x="653.5" y="108.8" width="9" height="2.2" fill="#777"/>
<path d="M665.2 117.6 L669.4 103.6 L673.4 117.6 M666.6 113.2 H672.2" fill="none" stroke="#777" stroke-width="1.6"/>
<!-- 18 select lightning -->
<path d="M702 113.4 H688 Q686.6 113.4 686.6 112 V92.6 Q686.6 91.2 688 91.2 H711.6 Q713 91.2 713 92.6 V96" fill="none" stroke="#333" stroke-width="1.3"/>
<path d="M698.9 103.2 L709.2 105.4 L706.8 107.8 L712.2 113.4 L709.6 116 L704.2 110.4 L701.6 113Z" fill="#5a95cc"/>
<path d="M712.8 95.2 L708.2 102.6 H711.2 L709 108.6 L716 100 H712.8 L715.2 95.2Z" fill="#f8c800"/>
<!-- 19 match prop -->
<rect x="724.6" y="91.6" width="20" height="22.4" fill="#fff" stroke="#111" stroke-width="1.3"/>
<g><rect x="725.4" y="92.3" width="3.3" height="6.3" fill="#5a00ff"/><rect x="728.7" y="92.3" width="3.3" height="6.3" fill="#10a89a"/><rect x="732" y="92.3" width="3.3" height="6.3" fill="#ff00ff"/><rect x="735.3" y="92.3" width="3.3" height="6.3" fill="#22ee10"/><rect x="738.6" y="92.3" width="3.3" height="6.3" fill="#ffc800"/><rect x="741.9" y="92.3" width="2" height="6.3" fill="#d82020"/></g>
<rect x="724.6" y="98.6" width="20" height="1.1" fill="#111"/>
<rect x="727" y="102.4" width="14" height="1.6" fill="#777"/>
<rect x="727" y="107.4" width="9" height="1.6" fill="#777"/>
<path d="M735.2 109.4 L741.4 104 L747 110 L741.4 115.6 Q738.2 113.6 735.2 109.4Z" fill="#f8c800" stroke="#555" stroke-width="0.6"/>
<path d="M744.4 106.6 L751.2 100.2 Q752.6 99.4 753.4 100.8 L747.4 108.4Z" fill="#f8c800" stroke="#555" stroke-width="0.6"/>
<!-- 20 undo -->
<path d="M768 103 L781 94 V99.2 Q794.6 100 797.8 114.6 Q791.6 107.2 781 107.4 V112.6Z" fill="#5a95cc"/>
<!-- 21 redo -->
<path d="M836 103 L823 94 V99.2 Q809.4 100 806.2 114.6 Q812.4 107.2 823 107.4 V112.6Z" fill="#c8c8c8"/>
<!-- 22 printer -->
<rect x="855.8" y="90.6" width="18.6" height="5.8" rx="1.2" fill="#fff" stroke="#333" stroke-width="1.3"/>
<rect x="850.6" y="95.6" width="28.8" height="14.6" rx="1.4" fill="#fff" stroke="#333" stroke-width="1.3"/>
<rect x="855.8" y="106.2" width="18.6" height="11.2" rx="1" fill="#5a95cc" stroke="#333" stroke-width="1.1"/>
<g fill="#fff"><rect x="859" y="110" width="12" height="1.3"/><rect x="859" y="113" width="9" height="1.3"/></g>
<!-- 23 globe arrow up -->
<g fill="none" stroke="#666" stroke-width="1.4">
<circle cx="902.5" cy="105" r="12.8"/><ellipse cx="902.5" cy="105" rx="6.6" ry="12.8"/><path d="M902.5 92.2 V117.8 M889.7 105 H915.3 M891.6 98.2 H913.4 M891.6 111.8 H913.4"/>
</g>
<path d="M893.2 102.6 Q897 92.6 906.2 94.4 V89.4 L916.4 96.4 L906.2 103 V98.6 Q897.8 97.6 893.2 102.6Z" fill="#5a95cc"/>
<!-- 24 globe arrow down -->
<g fill="none" stroke="#666" stroke-width="1.4">
<circle cx="941.5" cy="105" r="12.8"/><ellipse cx="941.5" cy="105" rx="6.6" ry="12.8"/><path d="M941.5 92.2 V117.8 M928.7 105 H954.3 M930.6 98.2 H952.4 M930.6 111.8 H952.4"/>
</g>
<path d="M953.8 89 Q956.6 99.6 947.4 104.8 L949.6 108.6 L937 109.8 L941.2 98.4 L943.6 102.4 Q951.6 97.6 953.8 89Z" fill="#5a95cc"/>
<!-- 25 pdf -->
<rect x="972.6" y="88.8" width="23" height="30.6" fill="#fff" stroke="#d81e3c" stroke-width="1.3"/>
<rect x="982.2" y="92.2" width="15.8" height="8.8" rx="0.8" fill="#d81e3c"/>
<text x="990" y="99.6" font-family="Liberation Sans" font-size="7.4" font-weight="bold" fill="#fff" text-anchor="middle">PDF</text>
<path d="M981.4 104.6 Q983 103.6 983.6 105.6 L979.2 114 Q977.6 115.6 978.4 113.8 L983 107.6 L989.6 112.6 Q990.6 113.8 989.2 113.2 L980.4 111.2" fill="none" stroke="#d81e3c" stroke-width="1.3"/>
<!-- 26 image -->
<rect x="1008.9" y="90.8" width="28.4" height="25.6" rx="2.8" fill="#f7f7f7" stroke="#333" stroke-width="1.7"/>
<circle cx="1014.8" cy="96.6" r="2.3" fill="#5a95cc"/>
<path d="M1012 113.4 L1019.6 106.4 L1021.2 108 L1028.4 101 L1034.4 113.4Z" fill="#5a95cc"/>
</svg>
<svg style="left:0;top:0" width="660" height="170" stroke-linejoin="round">
<g fill="#a4a4a4"><rect x="8" y="130" width="2" height="2"/><rect x="8" y="134" width="2" height="2"/><rect x="8" y="138" width="2" height="2"/><rect x="8" y="142" width="2" height="2"/><rect x="8" y="146" width="2" height="2"/><rect x="8" y="150" width="2" height="2"/><rect x="8" y="154" width="2" height="2"/><rect x="8" y="158" width="2" height="2"/></g>
<!-- layers icon -->
<path d="M17.8 151.2 L30.6 159.8 L43.4 151.2" fill="none" stroke="#666" stroke-width="3.2" stroke-linecap="round"/>
<path d="M17.8 145.8 L30.6 154.4 L43.4 145.8" fill="none" stroke="#666" stroke-width="3.2" stroke-linecap="round"/>
<path d="M30.6 152 L17.6 143 L17.6 141.2 Q17.4 140.2 18.6 139.6 L28.8 131.8 Q30 131 31.4 131.8 L42.8 138.6 Q43.8 139.4 43 140.2 L32.2 149.6 Q31.2 150.4 30 149.8 Z" fill="#fff"/>
<path d="M17.4 141.4 L29 132 Q30 131.2 31.2 132 L43.4 139 Q44 139.6 43.4 140.2 L31.6 149.6 Q30.6 150.2 29.6 149.6 L17.4 142.4 Q16.8 141.9 17.4 141.4Z" fill="#5a95cc"/>
<!-- layer combo -->
<rect x="50.5" y="135.5" width="249" height="21" fill="#fff" stroke="#7a7a7a" stroke-width="1"/>
<rect x="53" y="142" width="12" height="8" fill="#c4d0de"/>
<path d="M53 146.4 Q58.8 140.8 65 145.8 Q59 151 53 146.4Z" fill="#e8eef4"/>
<path d="M53 145.4 Q58.8 140.4 65 144.6" fill="none" stroke="#6a7e98" stroke-width="1"/>
<circle cx="60.2" cy="146" r="2.8" fill="#3a5878"/>
<circle cx="60.2" cy="146" r="1.3" fill="#0a1a2a"/>
<circle cx="60.8" cy="145.2" r="0.6" fill="#fff"/>
<path d="M67.4 146.4 V142.6 Q67.4 139.4 70.6 139.4 Q73.8 139.4 73.8 142.6 V146.6" fill="none" stroke="#c89a18" stroke-width="1.8"/>
<rect x="71" y="146" width="11" height="8" fill="#d8a820"/>
<g fill="#f4d060"><rect x="71.5" y="148" width="10" height="0.8"/><rect x="71.5" y="150.4" width="10" height="0.8"/><rect x="71.5" y="152.6" width="10" height="0.8"/></g>
<circle cx="89.3" cy="146.6" r="5" fill="#ffb400"/>
<circle cx="89.3" cy="146.6" r="3" fill="#ffe020"/>
<g fill="#ffe000"><rect x="84" y="141" width="1" height="1"/><rect x="94" y="141" width="1" height="1"/><rect x="84" y="151.6" width="1" height="1"/><rect x="94" y="151.6" width="1" height="1"/></g>
<rect x="99.8" y="142.8" width="8.6" height="8.6" fill="none" stroke="#000" stroke-width="1.4"/>
<path d="M287.5 145.5 L291.5 149.5 L295.5 145.5" fill="none" stroke="#333" stroke-width="1.1"/>
<rect x="302" y="131" width="1" height="30" fill="#c8c8c8"/>
<!-- color combo -->
<rect x="306.5" y="135.5" width="119" height="21" fill="#fff" stroke="#7a7a7a" stroke-width="1"/>
<rect x="311.6" y="142.6" width="8.8" height="8.8" fill="none" stroke="#000" stroke-width="1.2"/>
<path d="M412.5 145.5 L416.5 149.5 L420.5 145.5" fill="none" stroke="#333" stroke-width="1.1"/>
<rect x="428" y="131" width="1" height="30" fill="#c8c8c8"/>
<!-- linetype combo -->
<rect x="432.5" y="135.5" width="179" height="21" fill="#fff" stroke="#7a7a7a" stroke-width="1"/>
<rect x="435" y="145.6" width="62" height="1.2" fill="#111"/>
<path d="M598.5 145.5 L602.5 149.5 L606.5 145.5" fill="none" stroke="#333" stroke-width="1.1"/>
<!-- pencil -->
<g fill="#4a8ac8"><rect x="616" y="156" width="3.6" height="2.4"/><rect x="623" y="156" width="5" height="2.4"/><rect x="631" y="156" width="5" height="2.4"/><rect x="639" y="156" width="5" height="2.4"/></g>
<path d="M624.4 157.6 L625 150.4 L636.6 134.8 L642.8 139 L631.2 154.4Z" fill="#f8c800"/>
<path d="M637 134.4 L638.8 132 Q639.6 131.2 640.6 131.8 L643.8 134 Q644.6 134.6 644 135.6 L642.4 138Z" fill="#d01818"/>
</svg>
<div class="t" style="left:119px;top:140px;font-size:12px;line-height:14px">0</div>
<div class="t" style="left:331px;top:140px;line-height:14px;font-family:'Liberation Serif',serif;font-size:12px;color:#111">ByLayer</div>
<div class="t" style="left:503px;top:140px;line-height:14px;font-family:'Liberation Serif',serif;font-size:12px;color:#111">ByLayer</div>
<div id="ltb" class="a"></div>
<svg style="left:0;top:0" width="46" height="870" stroke-linejoin="round">
<g fill="#a4a4a4"><rect x="7" y="173" width="2" height="2"/><rect x="11" y="173" width="2" height="2"/><rect x="15" y="173" width="2" height="2"/><rect x="19" y="173" width="2" height="2"/><rect x="23" y="173" width="2" height="2"/><rect x="27" y="173" width="2" height="2"/><rect x="31" y="173" width="2" height="2"/><rect x="35" y="173" width="2" height="2"/></g>
<g fill="none" stroke="#333" stroke-width="1.5">
<path d="M12 207 L33.6 186"/>
<path d="M14 245 L32 227"/>
<path d="M12.4 282 H25 M27 264.2 A8.9 8.9 0 0 1 27 282"/>
<path d="M22.8 297.6 L37.6 308 L32 324.8 H13.6 L8.4 308Z"/>
<path d="M21 334.8 L34.6 348.4 L30.4 361.2 L12.4 362.2 V345.4Z"/>
<path d="M10.8 379.4 H35.2 V394.4 H10.8Z"/>
<path d="M11 436 Q14 421 35 412.6"/>
<circle cx="22.8" cy="462.8" r="14.2"/>
<path d="M10.8 492 Q13 501.6 17 503.4 Q19.4 504 23 499.6 Q26 496.4 28.6 497.8 Q32.6 500 35.2 507"/>
<ellipse cx="22.8" cy="540" rx="13.6" ry="8.8"/>
<path d="M12 571.6 Q17.6 565.6 26.4 566.2 Q37.4 567.4 37.6 576.2 Q37.4 582.8 26.8 585.6"/>
</g>
<path d="M23 463 L29.6 456.6" stroke="#333" stroke-width="1.4"/>
<path d="M31.8 454.2 L27.6 455.8 L30.2 458.4Z" fill="#333"/>
<g fill="#666"><path d="M38 220 L28.6 223.2 L35 229.4Z"/><path d="M8 250.2 L17.6 247 L11.2 240.8Z"/></g>
<g fill="#5a95cc">
<rect x="32.2" y="182" width="5.8" height="5.8"/><rect x="8.1" y="206.2" width="5.6" height="5.6"/>
<rect x="20.2" y="233" width="5.5" height="5.4"/>
<rect x="8.1" y="280" width="4.7" height="4.2"/><rect x="24.5" y="280" width="4.5" height="4.2"/><rect x="24.5" y="262.3" width="4.5" height="4"/>
<rect x="20.2" y="309" width="5.5" height="5.4"/><rect x="10.8" y="320.8" width="5" height="4.8"/>
<rect x="28" y="358.8" width="5.4" height="4.9"/>
<rect x="32.8" y="377" width="5.3" height="5.4"/><rect x="8.1" y="391.8" width="5.3" height="5"/>
<rect x="32.4" y="409.9" width="5.6" height="5.6"/><rect x="16.3" y="418" width="5.3" height="5.4"/><rect x="8.1" y="434.3" width="5.4" height="5.5"/>
<rect x="20.2" y="460.1" width="5.5" height="5.5"/>
<rect x="8.1" y="486.2" width="5.5" height="5.3"/><rect x="32.4" y="510.2" width="5.6" height="5.8"/>
<rect x="20.2" y="529.2" width="5.5" height="5.2"/><rect x="8.1" y="537.4" width="5.5" height="5.2"/><rect x="32.4" y="537.4" width="5.6" height="5.2"/>
<rect x="8.1" y="573.2" width="5.5" height="5.8"/><rect x="21.4" y="582.8" width="5.8" height="5.9"/>
<rect x="19" y="612" width="8" height="8"/>
</g>
<!-- insert block -->
<path d="M22.2 661 V639.4 Q22.2 638.8 22.8 638.8 H31.6 L37.2 645 V660" fill="#fff" stroke="#5a95cc" stroke-width="1.6"/>
<path d="M31 639 V644.6 H37.2Z" fill="#5a95cc"/>
<path d="M31.6 667.6 L38 661 V667.6Z" fill="#111"/>
<path d="M12.4 656.2 H10.4 V647.6 H25.4 V657" fill="none" stroke="#333" stroke-width="1.6"/>
<circle cx="26" cy="658.8" r="8.6" fill="none" stroke="#222" stroke-width="1.4"/>
<rect x="8.1" y="654.4" width="5.3" height="5.6" fill="#5a95cc"/>
<!-- make block -->
<path d="M31.6 675.8 V685.2 M26.5 680.7 H36.6" stroke="#5a95cc" stroke-width="1.6"/>
<path d="M12.4 693 V684.6 H28.2 V695 H15" fill="none" stroke="#333" stroke-width="1.6"/>
<circle cx="28.2" cy="696.8" r="9" fill="none" stroke="#222" stroke-width="1.4"/>
<rect x="9.3" y="692.2" width="5.9" height="5.6" fill="#5a95cc"/>
<!-- text A -->
<path d="M11 743.8 L20.4 714 H26.8 L36.3 743.8 H31.2 L28.9 736.4 H18.3 L16 743.8Z M19.6 732.2 H27.6 L23.6 719.4Z" fill="#666" fill-rule="evenodd"/>
<!-- image -->
<rect x="9.3" y="756.4" width="27.7" height="24.2" rx="2.6" fill="none" stroke="#444" stroke-width="1.6"/>
<path d="M12 778.5 L17.8 766.1 L24.5 773.2 L26.3 771.8 L34.3 778.5Z" fill="#666"/>
<circle cx="31.9" cy="762.4" r="2" fill="#666"/>
<path d="M13 761 V755.4 Q13 753.6 14.6 753.6 Q16.2 753.6 16.2 755.4 V761.6 Q16.2 763.2 14.4 763.2 Q12.2 763 12.4 761" fill="none" stroke="#5a95cc" stroke-width="1.2"/>
<!-- mtext -->
<path d="M8.6 806.6 L13.6 788 H16.8 L21.8 806.6 H19 L17.8 802 H12.4 L11.2 806.6Z M13 799.6 H17.2 L15.2 791.6Z" fill="#666" fill-rule="evenodd"/>
<path d="M23.4 790.2 H37.8 M23.4 798.8 H37.8 M23.4 805.4 H37.8 M8.3 812.5 H37.8 M8.3 819 H37.8" stroke="#333" stroke-width="1.5"/>
<!-- hatch -->
<path d="M12.5 828.3 V857.7 M33.3 828.3 V857.7 M8.1 832.4 H37.8 M8.1 853 H37.8" stroke="#333" stroke-width="1.5"/>
<path d="M14.4 842 L22 834.6 M14.4 848 L27.6 834.6 M16.4 851.8 L31.6 836.4 M21.6 851.8 L29.6 843.6" stroke="#5a95cc" stroke-width="1.4"/>
<path d="M20.4 857.2 L38 840" stroke="#222" stroke-width="1.3"/>
</svg>
<div id="rtb" class="a"></div>
<svg style="left:0;top:0" width="1400" height="930" stroke-linejoin="round">
<g fill="#a4a4a4"><rect x="1318" y="173" width="2" height="2"/><rect x="1322" y="173" width="2" height="2"/><rect x="1326" y="173" width="2" height="2"/><rect x="1330" y="173" width="2" height="2"/><rect x="1334" y="173" width="2" height="2"/><rect x="1338" y="173" width="2" height="2"/><rect x="1342" y="173" width="2" height="2"/><rect x="1346" y="173" width="2" height="2"/><rect x="1350" y="173" width="2" height="2"/><rect x="1354" y="173" width="2" height="2"/><rect x="1358" y="173" width="2" height="2"/><rect x="1362" y="173" width="2" height="2"/><rect x="1366" y="173" width="2" height="2"/><rect x="1370" y="173" width="2" height="2"/><rect x="1374" y="173" width="2" height="2"/><rect x="1378" y="173" width="2" height="2"/><rect x="1382" y="173" width="2" height="2"/><rect x="1386" y="173" width="2" height="2"/><rect x="1390" y="173" width="2" height="2"/></g>
<rect x="1355" y="182" width="1" height="741" fill="#b8b8b8"/>
<rect x="1319" y="370" width="30" height="1" fill="#bcbcbc"/>
<rect x="1319" y="414" width="30" height="1" fill="#bcbcbc"/>
<!-- left col -->
<g fill="none" stroke="#333" stroke-width="1.5">
<path d="M1319.3 182 V211.6 M1348.4 182 V211.6"/>
<path d="M1319.3 231.2 L1330.4 220.4 M1337.5 249.4 L1348.6 238.8"/>
<circle cx="1334" cy="272.8" r="14.2"/>
<circle cx="1334" cy="310.6" r="14.2"/>
<path d="M1319.3 356.9 L1338.6 337.5 M1319.3 361.2 H1348.6"/>
<path d="M1319.6 404.4 L1325.6 382.1 M1342.4 404.4 L1348.4 382.1"/>
</g>
<g stroke="#5a95cc" stroke-width="1.6" fill="none">
<path d="M1326 191 H1341.6"/>
<path d="M1329 230 L1339 240"/>
<path d="M1334.6 272.6 L1328 266"/>
<path d="M1328 304.4 L1339.8 316.4"/>
<path d="M1339.6 346 Q1342.6 351 1342.2 356"/>
<path d="M1327.6 390.4 H1341"/>
</g>
<g fill="#5a95cc">
<path d="M1320.6 191 L1328.6 185.8 V196.2Z"/><path d="M1347 191 L1339.2 185.8 V196.2Z"/>
<path d="M1325.4 226.6 L1334.4 229 L1328 235.4Z"/><path d="M1342.8 243.6 L1333.8 241.2 L1340.2 234.8Z"/>
<path d="M1324.6 263.3 L1333.6 265.4 L1327 272Z"/>
<path d="M1324.2 300.8 L1333.6 303 L1326.6 309.8Z"/><path d="M1343.6 320.2 L1334.2 318 L1341.2 311.2Z"/>
<path d="M1337 342.8 L1343.2 346 L1337.4 349.4Z"/><path d="M1342.4 360.4 L1339.2 353.6 L1346 353.8Z"/>
<path d="M1323.2 390.4 L1329.4 386.4 V394.4Z"/><path d="M1345.4 390.4 L1339.2 386.4 V394.4Z"/>
</g>
<!-- draw order -->
<rect x="1318.9" y="422.4" width="13.6" height="12.9" fill="#666"/>
<rect x="1335.7" y="438.8" width="13.3" height="12.9" fill="#666"/>
<rect x="1325" y="428.2" width="18" height="17.8" fill="#5a95cc" stroke="#f6f6f6" stroke-width="1"/>
<rect x="1325.5" y="466.6" width="17" height="16.4" fill="#5a95cc"/>
<rect x="1318.4" y="459.7" width="14.6" height="13.9" fill="#666" stroke="#f6f6f6" stroke-width="1"/>
<rect x="1335.2" y="476.1" width="14.3" height="13.9" fill="#666" stroke="#f6f6f6" stroke-width="1"/>
<rect x="1328.9" y="507.9" width="19.9" height="20" fill="#666"/>
<rect x="1318.6" y="497.6" width="21" height="21" fill="#5a95cc" stroke="#f6f6f6" stroke-width="1.4"/>
<rect x="1319.1" y="536.1" width="19.9" height="19.9" fill="#5a95cc"/>
<rect x="1328.4" y="545.4" width="20.9" height="20.9" fill="#666" stroke="#f6f6f6" stroke-width="1.4"/>
<!-- right col -->
<path d="M1363 202.4 L1383 182 L1393 192 L1372.2 211.4Z" fill="#ffc800"/>
<path d="M1363 202.4 L1370.4 195 L1380.2 204.4 L1372.2 211.4Z" fill="#ff4a00"/>
<path d="M1370.2 195.2 L1372.4 193 L1382.2 202.4 L1380 204.6Z" fill="#fff"/>
<rect x="1363" y="210.4" width="30" height="1.4" fill="#5a95cc"/>
<circle cx="1369.2" cy="227" r="6.2" fill="#666"/>
<path d="M1377 226.2 H1385.4 V230.6" fill="none" stroke="#666" stroke-width="1.6"/>
<path d="M1381.8 230.2 H1389.2 L1385.5 234.8Z" fill="#666"/>
<circle cx="1386" cy="242.7" r="6.2" fill="#5a95cc"/>
<circle cx="1377.4" cy="242.7" r="7.2" fill="#f2f2f2"/>
<circle cx="1377.4" cy="242.7" r="6.2" fill="#5a95cc"/>
<!-- move -->
<g fill="#666">
<path d="M1378 258 L1385 265 H1375.6 H1371Z"/><path d="M1378 288 L1385 281 H1371Z"/>
<path d="M1363 272.8 L1370 265.8 V279.8Z"/><path d="M1393 272.8 L1386 265.8 V279.8Z"/>
<rect x="1376.2" y="264" width="3.6" height="18"/><rect x="1369" y="271" width="18" height="3.6"/>
</g>
<circle cx="1378" cy="272.8" r="2.2" fill="#eee" stroke="#666" stroke-width="1"/>
<!-- rotate -->
<path d="M1386.8 321.6 A13.4 13.4 0 1 1 1381.6 299" fill="none" stroke="#333" stroke-width="1.5"/>
<path d="M1389.7 296.5 L1379.1 305.3 L1390.9 308.2Z" fill="#666"/>
<!-- scale -->
<path d="M1364 344.6 V335 H1392.6 V363.2 H1382.4" fill="none" stroke="#333" stroke-width="1.5" stroke-linejoin="miter"/>
<rect x="1363.2" y="348.7" width="14.8" height="15" rx="1.6" fill="#666"/>
<!-- offset -->
<path d="M1393 399.6 H1368.2 L1363.6 395 V385.6 L1366.6 381.4 H1370.8 V374 H1383.8 V381 H1393" fill="none" stroke="#555" stroke-width="1.1"/>
<path d="M1393 395.2 H1371 L1369.4 393.4 V387.6 L1370.8 385.8 H1375.2 V378.2 H1380 V385.4 H1393" fill="none" stroke="#8aa8c8" stroke-width="1.1"/>
<!-- array -->
<g fill="none" stroke-width="1.5">
<rect x="1364" y="411" width="12.4" height="12.4" stroke="#333"/>
<rect x="1380.2" y="411" width="12.4" height="12.4" stroke="#333"/>
<rect x="1364" y="427.2" width="12.4" height="12.4" stroke="#5a95cc"/>
<rect x="1380.2" y="427.2" width="12.4" height="12.4" stroke="#333"/>
</g>
<!-- mirror -->
<path d="M1375.6 450.4 V476.8 H1364.2Z" fill="none" stroke="#222" stroke-width="1.5"/>
<path d="M1379.7 449 V477.4 H1393Z" fill="#5a95cc"/>
<!-- spline -->
<path d="M1363.6 507.6 Q1364.6 494 1368.8 493 Q1372 492.6 1376 499.6 Q1380 506.6 1384 506 Q1389 505 1393 498.4" fill="none" stroke="#222" stroke-width="1.6"/>
<!-- chamfer -->
<path d="M1363.4 553.2 H1392.6 V524.8 H1386.6" fill="none" stroke="#222" stroke-width="1.5"/>
<path d="M1364 524.8 H1386 M1364 524.8 V546" fill="none" stroke="#222" stroke-width="1.4" stroke-dasharray="2 2"/>
<path d="M1363.6 553.2 V546.8" stroke="#222" stroke-width="1.5"/>
<path d="M1363.6 547.4 L1386.8 524.8" stroke="#5a95cc" stroke-width="1.5"/>
<!-- fillet -->
<path d="M1363.6 585.4 V591.2 H1392.6 V562.8 H1387" fill="none" stroke="#222" stroke-width="1.5"/>
<path d="M1364 562.8 H1385 M1364 562.8 V585" fill="none" stroke="#222" stroke-width="1.4" stroke-dasharray="2 2"/>
<path d="M1363.8 586 A23.2 23.2 0 0 1 1387 562.8" fill="none" stroke="#5a95cc" stroke-width="1.5"/>
<!-- trim -->
<path d="M1363.3 614.2 H1369.6 M1376.2 602.3 L1369.6 626" stroke="#222" stroke-width="1.6"/>
<path d="M1376.6 614.2 H1382.6 M1386.6 614.2 H1393" stroke="#5a95cc" stroke-width="1.6"/>
<!-- extend -->
<path d="M1365 649.8 H1376 M1363.3 657.8 H1369.2 M1392.6 641.2 L1386.2 664.3" stroke="#222" stroke-width="1.6"/>
<path d="M1365 649.8 H1376" stroke="#555" stroke-width="1.8"/>
<path d="M1379.8 649.8 L1374.4 646 V653.6Z" fill="#555"/>
<path d="M1372.1 657.8 H1376.3 M1379.1 657.8 H1384.5" stroke="#5a95cc" stroke-width="1.6"/>
<!-- cube -->
<path d="M1363.9 685.4 L1373.3 676.8 H1391.5 L1382.1 685.4Z" fill="#666"/>
<rect x="1363.3" y="689.2" width="17.1" height="16.5" fill="#666"/>
<path d="M1382.9 690 L1392.9 681.3 V698.9 L1382.9 705.7Z" fill="#5a95cc"/>
<!-- break -->
<path d="M1370 719.6 H1365 Q1363.6 719.6 1363.6 721 V738.8 Q1363.6 740 1365 740 H1391.4 Q1392.6 740 1392.6 738.8 V721 Q1392.6 719.6 1391.4 719.6 H1386" fill="none" stroke="#222" stroke-width="1.5"/>
<rect x="1369.2" y="717.1" width="4.6" height="4.7" fill="#5a95cc"/>
<rect x="1382.1" y="717.1" width="4.7" height="4.7" fill="#5a95cc"/>
<!-- join -->
<path d="M1363.1 767.1 H1371 M1385 767.1 H1392.8" stroke="#111" stroke-width="1.7"/>
<path d="M1371.3 761 V772.8 L1377.2 767Z M1384.6 761 V772.8 L1378.9 767Z" fill="#5a95cc"/>
</svg>
<div id="modelbar" class="a"></div>
<svg style="left:0;top:900px" width="1400" height="122">
<rect x="44.5" y="8.5" width="15.5" height="15" fill="#f0f0f0" stroke="#c4c4c4" stroke-width="1"/>
<rect x="60.5" y="8.5" width="16" height="15" fill="#f0f0f0" stroke="#c4c4c4" stroke-width="1"/>
<path d="M57 11.6 L52.4 16 L57 20.4Z" fill="#7a7a7a"/>
<path d="M66 11.6 L70.6 16 L66 20.4Z" fill="#7a7a7a"/>
<path d="M77.5 8 L85.5 23.5 H116.5 L125 8" fill="#fff" stroke="#222" stroke-width="1"/>
</svg>
<div class="t" style="left:89px;top:908px;font-size:12px;line-height:15px">模型</div>
<div id="cmdstrip" class="a"></div>
<div id="cmd" class="a"></div>
<svg style="left:0;top:925px" width="1400" height="80">
<rect x="2" y="53" width="1378" height="1" fill="#8c8c8c"/>
<rect x="1381" y="6" width="17" height="47" fill="#f0f0f0"/>
<path d="M1386.4 17.4 L1390 13.8 L1393.6 17.4" fill="none" stroke="#3a3a3a" stroke-width="2"/>
<path d="M1386.4 43 L1390 46.6 L1393.6 43" fill="none" stroke="#3a3a3a" stroke-width="2"/>
<rect x="1310" y="56" width="71" height="17.6" fill="#f0f0f0"/>
<rect x="1326" y="56" width="17" height="16" fill="#c8c8c8"/>
<path d="M1320.8 60.6 L1317.2 64 L1320.8 67.4" fill="none" stroke="#3a3a3a" stroke-width="2"/>
<path d="M1370.2 60.6 L1373.8 64 L1370.2 67.4" fill="none" stroke="#3a3a3a" stroke-width="2"/>
<rect x="1381" y="54" width="17" height="20" fill="#f0f0f0"/>
</svg>
<div class="t" style="left:5px;top:929px;font-size:13px;line-height:15px;color:#111">命令:</div>
<div class="t" style="left:45px;top:929px;font-size:12px;line-height:15px;color:#000;font-family:'Liberation Mono',monospace;letter-spacing:-0.3px">Mx_Line</div>
<div class="t" style="left:5px;top:962px;font-size:13px;line-height:15px;color:#111">指定第一点:</div>
<div class="t" style="left:5px;top:979px;font-size:13px;line-height:15px;color:#111">指定下一点:</div>
<div class="t" style="left:1340px;top:941px;font-size:19px;line-height:22px;color:#b8b8b8;font-weight:300">激活 W</div>
<div class="t" style="left:1340px;top:968px;font-size:13.5px;line-height:16px;color:#bcbcbc;font-weight:300">转到"设置</div>
<div id="status" class="a"></div>
<div class="t" style="left:5px;top:1003px;font-size:12.5px;line-height:16px;color:#111">-6674.444158, &nbsp;98303.076217, &nbsp;0.000000</div>
<svg style="left:0;top:999px" width="1400" height="23">
<g fill="#f6f6f6"><rect x="862" y="3" width="36" height="18"/><rect x="899" y="3" width="36" height="18"/><rect x="936" y="3" width="34" height="18"/></g>
<g fill="#dae6f3" stroke="#3a7fd0" stroke-width="1">
<rect x="973.5" y="3.5" width="57" height="17"/>
<rect x="1033.5" y="3.5" width="57" height="17"/>
<rect x="1093.5" y="3.5" width="35" height="17"/>
<rect x="1131.5" y="3.5" width="32" height="17"/>
</g>
<rect x="1320" y="3" width="1" height="18" fill="#dcdcdc"/>
<rect x="1326" y="4" width="69" height="16" fill="#fff"/>
<path d="M1329.5 18.6 L1333.6 4.8 H1337 L1340.4 12 L1342 4.8 H1345.2 L1346.2 18.6 H1342.6 L1341.6 12.8 L1338.6 18.6 H1336.2 L1334 13.2 L1332.8 18.6Z" fill="#20a898"/>
<path d="M1331 17.6 L1344 9.4" stroke="#fff" stroke-width="0.9"/>
</svg>
<div class="t" style="left:867px;top:1004px;font-size:12px;line-height:16px;color:#111">栅格</div>
<div class="t" style="left:903px;top:1004px;font-size:12px;line-height:16px;color:#111">正交</div>
<div class="t" style="left:939px;top:1004px;font-size:12px;line-height:16px;color:#111">极轴</div>
<div class="t" style="left:975px;top:1004px;font-size:12px;line-height:16px;color:#111">对象捕捉</div>
<div class="t" style="left:1035px;top:1004px;font-size:12px;line-height:16px;color:#111">对象追踪</div>
<div class="t" style="left:1096px;top:1004px;font-size:12px;line-height:16px;color:#111">DYN</div>
<div class="t" style="left:1133px;top:1004px;font-size:12px;line-height:16px;color:#111">线宽</div>
<div class="t" style="left:1169px;top:1004px;font-size:12px;line-height:16px;color:#1a1aee">提交软件问题或增加新功能</div>
<div class="t" style="left:1349px;top:1004px;font-size:12.5px;line-height:16px;color:#1e3050">MxCAD</div>
</body></html>
